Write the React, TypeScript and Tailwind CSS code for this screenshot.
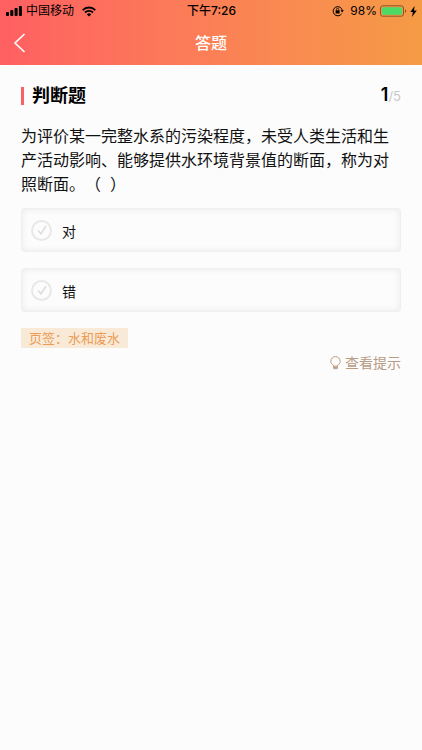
const OPTIONS = [
  { id: "answer-true", label: "对" },
  { id: "answer-false", label: "错" },
];

function StatusBar() {
  return (
    <div className="grid h-[22px] grid-cols-[1fr_auto_1fr] items-center pl-[6px] pr-[5px] text-[12px] leading-[22px] text-black">
      <div className="flex items-center">
        <svg className="mr-1 h-[10px] w-4" viewBox="0 0 16 10" fill="currentColor" aria-hidden="true">
          <rect x="0" y="6" width="3" height="4" rx="0.8" />
          <rect x="4.3" y="4" width="3" height="6" rx="0.8" />
          <rect x="8.6" y="2" width="3" height="8" rx="0.8" />
          <rect x="12.9" y="0" width="3" height="10" rx="0.8" />
        </svg>
        <span>中国移动</span>
        <svg className="ml-2 h-[11px] w-[14px]" viewBox="0 0 14 11" fill="none" stroke="currentColor" aria-hidden="true">
          <path d="M0.7 4.1a9 9 0 0 1 12.6 0" strokeWidth="1.9" />
          <path d="M3 6.5a5.7 5.7 0 0 1 8 0" strokeWidth="1.8" />
          <path d="M7 10.6 4.8 8.4a3.1 3.1 0 0 1 4.4 0Z" fill="currentColor" stroke="none" />
        </svg>
      </div>
      <span className="font-medium">下午7:26</span>
      <div className="flex items-center justify-end">
        <svg className="mr-[6px] h-3 w-3" viewBox="0 0 12 12" fill="none" stroke="currentColor" aria-hidden="true">
          <path d="M9.6 8.8A4.6 4.6 0 1 1 10.3 5.4" strokeWidth="1" />
          <path d="M8.5 5.3h3.4L10.2 7.6Z" fill="currentColor" stroke="none" />
          <rect x="3.6" y="5.3" width="4" height="3.1" rx="0.4" fill="currentColor" stroke="none" />
          <path d="M4.4 5.4V4.5a1.2 1.2 0 0 1 2.4 0v0.9" strokeWidth="0.8" />
        </svg>
        <span className="mr-[3px]">98%</span>
        <svg className="mr-[3px] h-3 w-[27px]" viewBox="0 0 27 12" aria-hidden="true">
          <rect x="0.5" y="0.8" width="23" height="10.4" rx="2.2" fill="none" stroke="#8c542c" />
          <rect x="2" y="2.3" width="20" height="7.4" rx="1" fill="#4cd964" />
          <path d="M25 4.2c1.6.5 1.6 3.1 0 3.6Z" fill="#8c542c" />
        </svg>
        <svg className="h-[11px] w-[7px]" viewBox="0 0 7 11" fill="currentColor" aria-hidden="true">
          <path d="M4.6 0 0.3 6h2.6L1.9 11 6.8 4.6H4Z" />
        </svg>
      </div>
    </div>
  );
}

export default function App() {
  return (
    <div className="min-h-screen bg-[#fcfcfc] font-['Inter','Noto_Sans_CJK_SC',sans-serif] text-[#111111]">
      <header className="h-[65px] bg-linear-to-r from-[#ff5f62] to-[#f59b45]">
        <StatusBar />
        <div className="grid h-[42px] grid-cols-[48px_1fr_48px] items-center text-white">
          <button type="button" aria-label="返回" className="flex h-full items-center pl-[13px]">
            <svg className="h-[20px] w-[13px]" viewBox="0 0 13 20" fill="none" stroke="currentColor" strokeWidth="1.6" aria-hidden="true">
              <path d="M11.5 1 2 10l9.5 9" />
            </svg>
          </button>
          <h1 className="text-center text-[16px] leading-6 font-medium">答题</h1>
        </div>
      </header>

      <main className="px-[21px] pt-4">
        <div className="flex items-center justify-between">
          <div className="flex items-center gap-2">
            <span className="h-[18px] w-[3px] bg-[#fa6065]" />
            <h2 className="text-[18px] leading-7 font-bold text-black">判断题</h2>
          </div>
          <p className="text-[13px] leading-7 text-[#c8c8c8]">
            <span className="text-[18px] font-semibold text-black">1</span>/5
          </p>
        </div>

        <form className="mt-[14px]">
          <fieldset>
            <legend className="text-[16px] leading-6 [text-spacing-trim:space-all]">
              为评价某一完整水系的污染程度，未受人类生活和生产活动影响、能够提供水环境背景值的断面，称为对照断面。（&nbsp;&nbsp;）
            </legend>
            <div className="mt-3 flex flex-col gap-4">
              {OPTIONS.map((option) => (
                <label
                  key={option.id}
                  htmlFor={option.id}
                  className="flex h-11 items-center rounded-[3px] border border-[#efefef] px-[9px] shadow-[inset_0_0_7px_rgba(0,0,0,0.08)]"
                >
                  <span className="mr-[10px] grid size-[21px] place-items-center">
                    <input
                      id={option.id}
                      type="radio"
                      name="answer"
                      value={option.label}
                      className="col-start-1 row-start-1 size-[21px] appearance-none rounded-full border-2 border-[#e8e8e8]"
                    />
                    <svg className="pointer-events-none col-start-1 row-start-1 h-[10px] w-[10px]" viewBox="0 0 10 10" fill="none" stroke="#dcdcdc" strokeWidth="1.5" aria-hidden="true">
                      <path d="M1 5.5 4 8.8 9 1" />
                    </svg>
                  </span>
                  <span className="pt-1 text-[14px] leading-5">{option.label}</span>
                </label>
              ))}
            </div>
          </fieldset>
        </form>

        <div className="mt-4 flex">
          <span className="bg-[#f8ead7] px-2 text-[13px] leading-5 text-[#ed9a55]">页签：水和废水</span>
        </div>
        <div className="mt-[5px] flex justify-end">
          <button type="button" className="flex items-center gap-1 text-[14px] leading-5 text-[#b89b84]">
            <svg className="h-[14px] w-[11px]" viewBox="0 0 11 14" fill="none" stroke="currentColor" strokeWidth="1" aria-hidden="true">
              <path d="M3.7 10.2V9.4C2 8.5.8 7.1.8 5.3a4.7 4.7 0 0 1 9.4 0c0 1.800-1.200 3.200-2.900 4.100v.8Z" />
              <path d="M3.700 10v2.700h3.600V10M3.700 11.500h3.600" />
            </svg>
            查看提示
          </button>
        </div>
      </main>
    </div>
  );
}
